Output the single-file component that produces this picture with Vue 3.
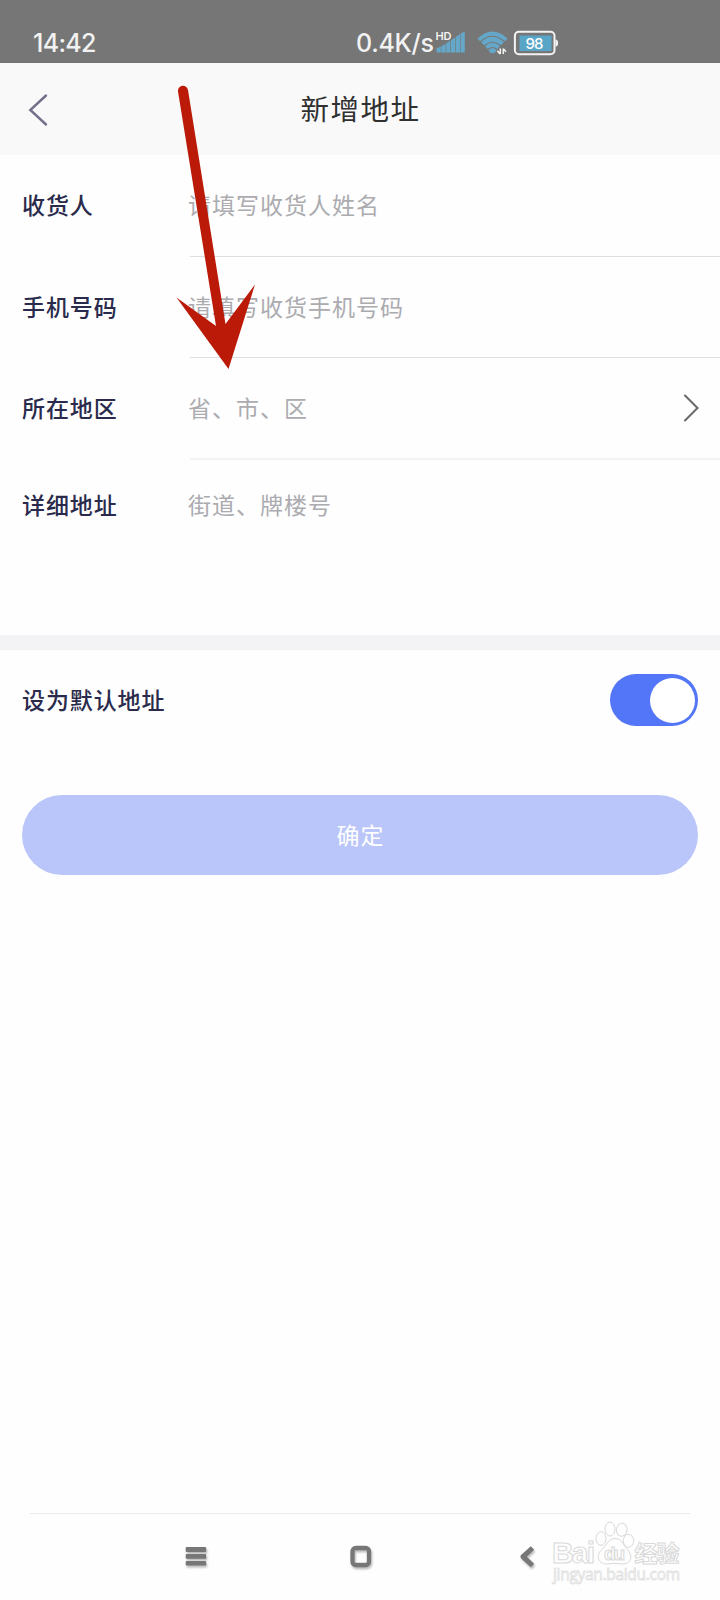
<script setup>
const fields = [
  { id: 'name', label: '收货人', hint: '请填写收货人姓名' },
  { id: 'phone', label: '手机号码', hint: '请填写收货手机号码' },
  { id: 'region', label: '所在地区', hint: '省、市、区', chevron: true },
  { id: 'detail', label: '详细地址', hint: '街道、牌楼号' }
]
</script>

<template>
  <div class="screen">
    <div class="status">
      <span class="time">14:42</span>
      <span class="speed">0.4K/s</span>
      <svg class="status-icons" width="126" height="30" viewBox="0 0 126 30">
        <g fill="#65a7c8">
          <path d="M0.500 25.500v-4l4.300-2V25.500zM5.400 25.500v-6.300l4.200-2.400V25.500zM10.200 25.500V16.500l4.200-2.900V25.500zM15 25.500V13.200l4.200-2.900V25.500zM19.800 25.500V10l4.200-3V25.500zM24.600 25.500V6.600L28.800 4.500v21z" />
          <path d="M41.500 11.500Q56.500 -2.500 71.500 11.500L69 14.300Q56.500 3 44 14.300Z" />
          <path d="M45 15Q56.500 4.500 68 15L65 18.300Q56.500 11 48 18.300Z" />
          <path d="M49 19Q56.500 12.500 64 19L61.500 22Q56.500 17.800 51.500 22Z" />
          <path d="M52.500 23Q56.500 19 60.500 23L59.500 25Q56.500 27.500 53.500 25Z" />
        </g>
        <g fill="none" stroke="#f2f2f0" stroke-width="1.500">
          <path d="M64.300 21.500v5.500M61.300 23.700l2.800 3.200M67.300 27v-5.500M67.300 21.700l2.700 3" />
        </g>
        <rect x="78.900" y="4.700" width="39.600" height="22.500" rx="4" fill="none" stroke="#f3f3f3" stroke-width="2" />
        <path d="M119.500 12.400q2.600 0 2.600 3.600t-2.600 3.600z" fill="#f3f3f3" />
        <rect x="83.500" y="8.500" width="32" height="15.500" fill="#59a5c8" />
        <text class="hd" x="-0.500" y="12.500" textLength="16">HD</text>
        <text class="battery" x="89.500" y="21.500" textLength="18">98</text>
      </svg>
    </div>

    <header class="header">
      <svg class="back" width="24" height="36" viewBox="0 0 24 36">
        <path d="M19 3.500L3.300 18L19 32.500" fill="none" stroke="#73708a" stroke-width="2.400" stroke-linecap="round" />
      </svg>
      <h1>新增地址</h1>
    </header>

    <main>
      <div v-for="f in fields" :key="f.id" class="row" :class="f.id">
        <span class="label">{{ f.label }}</span>
        <div class="value">
          <span>{{ f.hint }}</span>
          <svg v-if="f.chevron" class="chevron" width="20" height="32" viewBox="0 0 20 32">
            <path d="M4 3.500L16.500 16L4 28.500" fill="none" stroke="#6a6a6a" stroke-width="2.100" stroke-linecap="round" />
          </svg>
        </div>
      </div>
      <div class="band"></div>
      <div class="default">
        <span class="label">设为默认地址</span>
        <div class="switch"><div class="knob"></div></div>
      </div>
      <button class="confirm" type="button">确定</button>
    </main>

    <footer class="nav">
      <div class="slot">
        <svg class="shadow" width="30" height="30" viewBox="0 0 30 30" fill="#777">
          <rect x="4.700" y="6" width="20.500" height="5" rx="1" />
          <rect x="4.700" y="13" width="20.500" height="4.800" rx="1" />
          <rect x="4.700" y="20" width="20.500" height="4.500" rx="1" />
        </svg>
      </div>
      <div class="slot">
        <svg class="shadow" width="30" height="30" viewBox="0 0 30 30">
          <rect x="6.500" y="7" width="16.500" height="17" rx="3.200" fill="none" stroke="#777" stroke-width="4.300" />
        </svg>
      </div>
      <div class="slot">
        <svg class="shadow" width="30" height="30" viewBox="0 0 30 30">
          <path d="M20.500 7L11 15.600L20.500 24.500" fill="none" stroke="#777" stroke-width="5" stroke-linejoin="round" />
        </svg>
      </div>
    </footer>

    <svg class="arrow" width="84" height="290" viewBox="0 0 84 290">
      <path d="M2 11.500A5 5 0 0 1 12 10L49.500 244L79 204.500L52.500 289L0.500 217.500L40 246Z" fill="#bb1a08" />
    </svg>

    <svg class="watermark" width="140" height="76" viewBox="0 0 140 76">
      <g fill="#fefefe" stroke="#d9d9d9" stroke-width="1">
        <ellipse cx="50" cy="26.500" rx="5" ry="6.800" />
        <ellipse cx="59" cy="17" rx="5" ry="7" />
        <ellipse cx="70.700" cy="17.700" rx="5.300" ry="6.500" transform="rotate(8 70.700 17.700)" />
        <ellipse cx="77.500" cy="28.800" rx="5.200" ry="6.500" />
        <path d="M64 26.500C71 26.500 72 33 76 37C82 43 81 52 72 52Q68 51.500 64 51.500Q60 51.500 56 52C46 52 45 43 51 37.500C56 33 57 26.500 64 26.500Z" />
        <text class="wm-latin" x="1" y="50.500" textLength="43">Bai</text>
        <text class="wm-du" x="53" y="47.500" textLength="21">du</text>
        <text class="wm-cjk" x="83.500" y="49.500" textLength="45">经验</text>
        <text class="wm-url" x="2" y="67.500" textLength="127">jingyan.baidu.com</text>
      </g>
    </svg>
  </div>
</template>

<style>
body {
  margin: 0;
  background: #fefefe;
}
</style>

<style scoped>
.screen {
  position: relative;
  display: flex;
  flex-direction: column;
  width: 720px;
  height: 1600px;
  overflow: hidden;
  background: #fefefe;
  font-family: "Noto Sans CJK SC", sans-serif;
}
.status {
  display: flex;
  box-sizing: border-box;
  height: 63px;
  padding: 27px 0 0 33px;
  background: #767676;
  color: #f2f2f2;
  font: 500 25px/32px Inter, "Noto Sans CJK SC", sans-serif;
}
.time {
  width: 323px;
  letter-spacing: -0.7px;
}
.speed {
  width: 79.500px;
  letter-spacing: -0.3px;
  white-space: nowrap;
}
.status-icons {
  display: block;
}
.hd {
  fill: #f2f2f2;
  font: 600 11px Inter, sans-serif;
}
.battery {
  fill: #fff;
  font: 500 15px Inter, sans-serif;
}
.header {
  display: grid;
  grid-template-columns: 72px 1fr 72px;
  align-items: center;
  height: 92px;
  background: #f9f9f9;
}
.back {
  margin: 1px 0 0 27px;
}
h1 {
  margin: 0;
  padding: 0 0 2px 1px;
  color: #303030;
  text-align: center;
  font-size: 28.500px;
  font-weight: 400;
  line-height: 40px;
  letter-spacing: 1.500px;
}
main {
  flex: 1;
}
.row {
  display: flex;
  box-sizing: border-box;
  padding-left: 22px;
}
.label {
  width: 168px;
  color: #2a2b4c;
  font-size: 23px;
  font-weight: 500;
  line-height: 34px;
  letter-spacing: 0.900px;
  white-space: nowrap;
}
.value {
  display: flex;
  box-sizing: border-box;
  flex: 1;
  justify-content: space-between;
  border-bottom: 1px solid #dedede;
  color: #ababb0;
  font-size: 23px;
  font-weight: 400;
  line-height: 34px;
  letter-spacing: 1px;
}
.value span {
  margin-left: -2px;
}
.name {
  height: 102px;
  padding-top: 32px;
}
.phone {
  height: 101px;
  padding-top: 32px;
}
.region {
  height: 102px;
  padding-top: 32px;
}
.region .value {
  border-bottom: 2px solid #f3f3f4;
}
.detail {
  height: 175px;
  padding-top: 27px;
}
.detail .value {
  border-bottom: 0;
}
.chevron {
  margin: 2px 19px 0 0;
}
.band {
  height: 15px;
  background: #f3f3f5;
}
.default {
  display: flex;
  align-items: center;
  justify-content: space-between;
  height: 100px;
  padding: 0 22px;
}
.default .label {
  padding-bottom: 3px;
}
.switch {
  display: flex;
  box-sizing: border-box;
  justify-content: flex-end;
  width: 88px;
  height: 52px;
  padding: 3.500px;
  border-radius: 26px;
  background: #5276f7;
}
.knob {
  width: 45px;
  height: 45px;
  border-radius: 50%;
  background: #fff;
}
.confirm {
  display: block;
  width: 676px;
  height: 80px;
  margin: 45px 22px 0;
  padding: 0 0 3px 1px;
  border: 0;
  border-radius: 40px;
  background: #bac6fa;
  color: #fff;
  font: 400 23px/34px "Noto Sans CJK SC", sans-serif;
  letter-spacing: 1px;
}
.nav {
  display: grid;
  grid-template-columns: repeat(3, 165.500px);
  justify-content: start;
  box-sizing: border-box;
  height: 87px;
  margin: 0 30px;
  padding: 27px 0 0 83px;
  border-top: 1px solid #ebebeb;
}
.slot {
  display: flex;
  justify-content: center;
}
.shadow {
  filter: drop-shadow(1px 2px 1px rgba(0, 0, 0, 0.28));
}
.arrow {
  position: absolute;
  top: 80px;
  left: 176px;
}
.watermark {
  position: absolute;
  top: 1512px;
  left: 551px;
}
.wm-latin {
  font: 700 30px "Liberation Sans", sans-serif;
}
.wm-du {
  font: 700 19px "Liberation Sans", sans-serif;
}
.wm-cjk {
  font: 700 23px "Noto Sans CJK SC", sans-serif;
}
.wm-url {
  stroke: #e0e0e0;
  stroke-width: 0.8px;
  font: 400 15.500px "Open Sans", sans-serif;
}
</style>
